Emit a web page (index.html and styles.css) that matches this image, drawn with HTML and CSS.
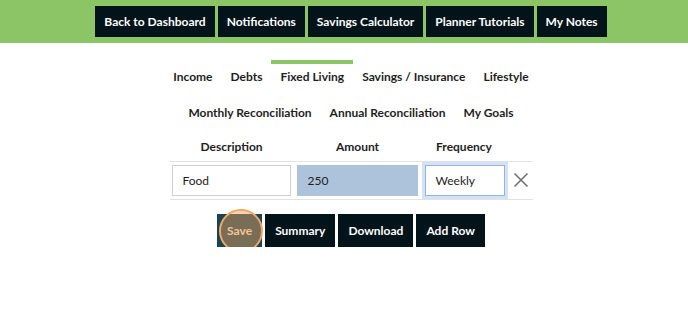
FILE: index.html
```html
<!DOCTYPE html>
<html>
<head>
<meta charset="utf-8">
<link rel="stylesheet" href="styles.css">
</head>
<body>
<header class="topbar">
  <nav class="topnav">
    <a class="navbtn">Back to Dashboard</a>
    <a class="navbtn">Notifications</a>
    <a class="navbtn">Savings Calculator</a>
    <a class="navbtn">Planner Tutorials</a>
    <a class="navbtn">My Notes</a>
  </nav>
</header>
<main class="page">
  <div class="tabs">
    <span class="tab">Income</span>
    <span class="tab">Debts</span>
    <span class="tab active">Fixed Living</span>
    <span class="tab">Savings / Insurance</span>
    <span class="tab">Lifestyle</span>
  </div>
  <div class="tabs">
    <span class="tab">Monthly Reconciliation</span>
    <span class="tab">Annual Reconciliation</span>
    <span class="tab">My Goals</span>
  </div>
  <table class="grid">
    <thead>
      <tr>
        <th class="c-desc">Description</th>
        <th class="c-amt">Amount</th>
        <th class="c-freq">Frequency</th>
        <th class="c-x"></th>
      </tr>
    </thead>
    <tbody>
      <tr>
        <td class="c-desc"><div class="field">Food</div></td>
        <td class="c-amt"><div class="field amount">250</div></td>
        <td class="c-freq"><div class="field focus">Weekly</div></td>
        <td class="c-x">
          <svg class="xicon" width="16" height="16" viewBox="0 0 16 16"><path d="M1.5 1.5 L14.5 14.5 M14.5 1.5 L1.5 14.5" stroke="#6d6d6d" stroke-width="1.5" fill="none"/></svg>
        </td>
      </tr>
    </tbody>
  </table>
  <div class="actions">
    <a class="actbtn save">Save<span class="click"></span></a>
    <a class="actbtn">Summary</a>
    <a class="actbtn">Download</a>
    <a class="actbtn">Add Row</a>
  </div>
</main>
</body>
</html>
```
FILE: styles.css
```css
html, body {
  margin: 0;
  padding: 0;
  background: #ffffff;
  font-family: Lato, "Open Sans", Arial, sans-serif;
  color: #1e1e1e;
}
.topbar {
  background: #8cc566;
  height: 43px;
  padding-left: 14px;
  box-sizing: border-box;
}
.topnav {
  display: flex;
  justify-content: center;
  gap: 3px;
  padding-top: 6px;
}
.navbtn {
  display: block;
  background: #03131a;
  color: #ffffff;
  font-weight: 700;
  font-size: 12px;
  height: 31px;
  line-height: 31px;
  padding: 0 9px;
}
.page {
  padding-left: 14px;
  padding-top: 17px;
}
.tabs {
  display: flex;
  justify-content: center;
}
.tab {
  display: block;
  font-weight: 700;
  font-size: 12px;
  line-height: 16px;
  padding: 5px 9px 11px;
  border-top: 4px solid transparent;
  color: #1e1e1e;
}
.tab.active {
  border-top-color: #8cc566;
}
.grid {
  margin: 0 auto;
  border-collapse: collapse;
  font-size: 12px;
  table-layout: fixed;
  width: 363px;
}
.grid th,
.grid td {
  box-sizing: border-box;
}
.grid th {
  font-weight: 700;
  height: 29px;
  padding: 0;
  text-align: center;
  border-bottom: 1px solid #e2e2e2;
}
.grid td {
  padding: 3px 0;
  border-bottom: 1px solid #e2e2e2;
  vertical-align: middle;
}
.c-desc { width: 124px; }
.c-amt { width: 128px; }
.c-freq { width: 85px; }
.c-x { width: 26px; }
.grid td.c-desc { padding-left: 2px; }
.grid td.c-amt { padding-left: 3px; }
.grid td.c-freq { padding-left: 3px; }
.field {
  box-sizing: border-box;
  height: 31px;
  line-height: 29px;
  border: 1px solid #cfcfcf;
  padding: 0 10px;
  font-size: 12px;
  color: #1e1e1e;
  background: #fff;
}
.c-desc .field { width: 119px; }
.field.amount {
  width: 121px;
  background: #adc3dc;
  border-color: #adc3dc;
}
.field.focus {
  width: 80px;
  border-color: #8fb3e2;
  box-shadow: 0 0 0 3px #d3e2f5;
}
.xicon {
  display: block;
  margin-left: 6px;
}
.actions {
  display: flex;
  justify-content: center;
  gap: 3px;
  margin-top: 14px;
}
.actbtn {
  display: block;
  position: relative;
  background: #03131a;
  color: #ffffff;
  font-weight: 700;
  font-size: 12px;
  height: 33px;
  line-height: 33px;
  padding: 0 10px;
}
.actbtn.save {
  background: #1b4452;
  color: #f6e0c8;
}
.click {
  position: absolute;
  left: 50%;
  top: 50%;
  width: 40px;
  height: 40px;
  margin-left: -21px;
  margin-top: -21px;
  border-radius: 50%;
  border: 2px solid #f3a765;
  background: rgba(240, 160, 90, 0.45);
}
```
